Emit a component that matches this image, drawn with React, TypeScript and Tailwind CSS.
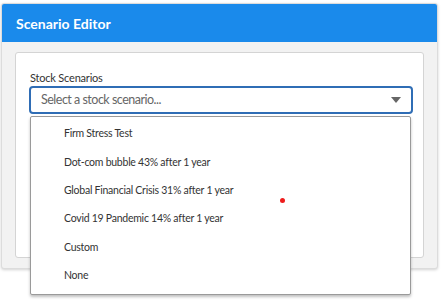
// Scenario Editor — select with open dropdown

const options = [
  "Firm Stress Test",
  "Dot-com bubble 43% after 1 year",
  "Global Financial Crisis 31% after 1 year",
  "Covid 19 Pandemic 14% after 1 year",
  "Custom",
  "None",
];

function Caret() {
  return (
    <svg width="10" height="6" viewBox="0 0 10 6" className="text-[#666]">
      <path d="M0 0h10L5 6z" fill="currentColor" />
    </svg>
  );
}

export default function App() {
  return (
    <div className="relative w-[445px] h-[308px] bg-white font-['Lato',sans-serif] overflow-hidden">
      {/* Panel */}
      <div className="ml-[1px] mt-[3px] w-[437px] rounded-[3px] bg-[#f2f2f2] border border-[#dcdcdc] shadow-[0_1px_3px_rgba(0,0,0,0.18)]">
        <div className="h-[38px] bg-[#1a8aeb] flex items-center px-[14px] rounded-t-[2px]">
          <h1 className="text-white font-bold text-[14px]">
            Scenario Editor
          </h1>
        </div>

        <div className="px-[13px] pt-[10px] pb-[10px]">
          <div className="h-[206px] bg-white border border-[#d4d4d4] rounded-[3px] px-[13px] pt-[18px]">
            <label className="block text-[11px] leading-[14px] text-[#333] ml-[1px] tracking-[-0.2px]">
              Stock Scenarios
            </label>

            <div className="relative mt-[1px]">
              <div className="h-[28px] w-[384px] border-2 border-[#2f6db5] rounded-[4px] flex items-center justify-between pl-[10px] pr-[10px]">
                <span className="text-[12.5px] text-[#666] tracking-[-0.5px]">Select a stock scenario...</span>
                <Caret />
              </div>

              {/* Dropdown menu */}
              <ul className="absolute left-[1px] top-[30px] w-[381px] h-[179px] bg-white border border-[#9a9a9a] rounded-[2px] shadow-[0_2px_3px_rgba(0,0,0,0.25)] pt-[3px] z-10">
                {options.map((o) => (
                  <li
                    key={o}
                    className="h-[28.4px] flex items-center pl-[33px] text-[10.5px] tracking-[-0.25px] text-[#333]"
                  >
                    {o}
                  </li>
                ))}
              </ul>
            </div>
          </div>
        </div>
      </div>

      {/* Cursor marker */}
      <div className="absolute left-[280px] top-[198px] w-[5px] h-[5px] rounded-full bg-[#ee1c1c] z-20" />
    </div>
  );
}
